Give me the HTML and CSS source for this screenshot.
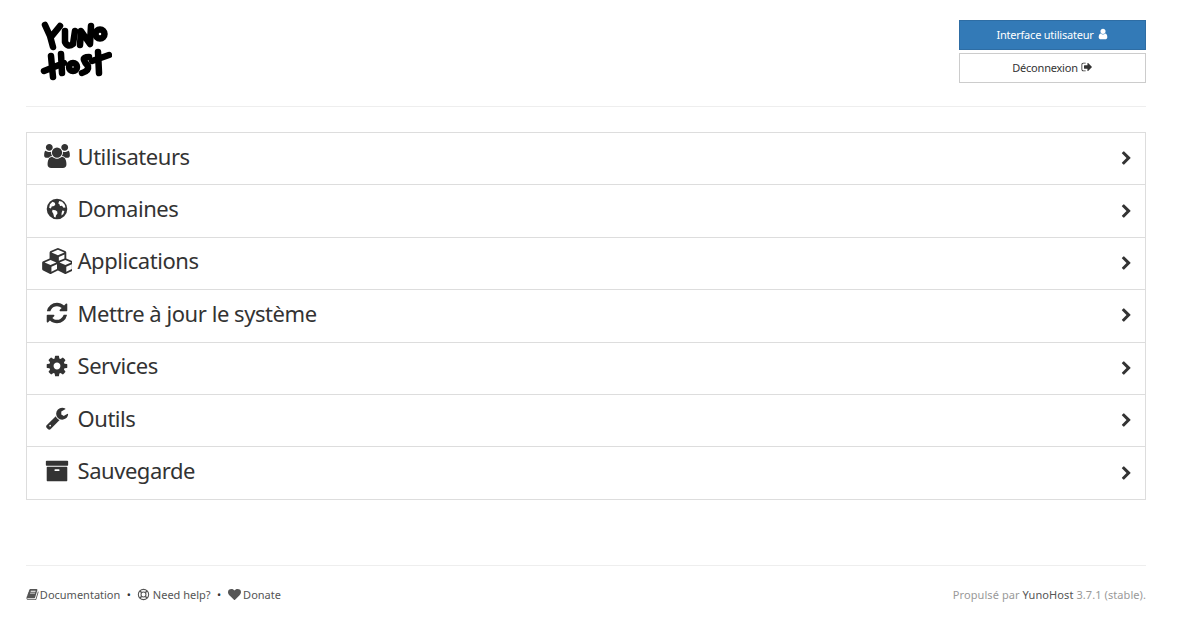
FILE: index.html
```html
<!DOCTYPE html>
<html lang="fr">
<head>
    <meta charset="UTF-8">
    <title>YunoHost Admin</title>
    <link rel="stylesheet" href="styles.css">
</head>
<body>
<svg class="icon-sprite" xmlns="http://www.w3.org/2000/svg">
    <symbol id="i-chevron" viewBox="0 0 1792 1792"><path d="M1363 877l-742 742q-19 19-45 19t-45-19l-166-166q-19-19-19-45t19-45l531-531-531-531q-19-19-19-45t19-45l166-166q19-19 45-19t45 19l742 742q19 19 19 45t-19 45z"/></symbol>
    <symbol id="i-users" viewBox="0 0 1920 1792"><path d="M593 896q-162 5-265 128h-134q-82 0-138-40.5t-56-118.5q0-353 124-353 6 0 43.5 21t97.5 42.5 119 21.5q67 0 133-23-5 37-5 66 0 139 81 256zm1071 637q0 120-73 189.5t-194 69.5h-874q-121 0-194-69.5t-73-189.5q0-53 3.5-103.5t14-109 26.5-108.5 43-97.5 62-81 85.5-53.5 111.5-20q10 0 43 21.5t73 48 107 48 135 21.5 135-21.5 107-48 73-48 43-21.5q61 0 111.5 20t85.5 53.5 62 81 43 97.5 26.5 108.5 14 109 3.5 103.5zm-1024-1277q0 106-75 181t-181 75-181-75-75-181 75-181 181-75 181 75 75 181zm704 384q0 159-112.5 271.5t-271.5 112.5-271.5-112.5-112.5-271.5 112.5-271.5 271.5-112.5 271.5 112.5 112.5 271.5zm576 225q0 78-56 118.5t-138 40.5h-134q-103-123-265-128 81-117 81-256 0-29-5-66 66 23 133 23 59 0 119-21.5t97.5-42.5 43.5-21q124 0 124 353zm-128-609q0 106-75 181t-181 75-181-75-75-181 75-181 181-75 181 75 75 181z"/></symbol>
    <symbol id="i-globe" viewBox="0 0 1792 1792"><path fill-rule="evenodd" d="M896 128a768 768 0 1 0 0 1536a768 768 0 1 0 0-1536zM560 360l170 70 40 130-90 110-180 40-60 150-130-60 60-250zM1060 290l220 70 190 210 60 210-150 20-110-140-150 20-40-140-90-60zM560 960l220 20 130 110 20 150-110 150-30 140-110-40-60-240-90-140zM1300 1010l150 40-80 220-140 110 10-190z"/></symbol>
    <symbol id="i-cubes" viewBox="0 0 2048 1792"><path d="M640 1632l384-192v-314l-384 164v342zm-64-454l404-173-404-173-404 173zm1088 454l384-192v-314l-384 164v342zm-64-454l404-173-404-173-404 173zm-448-293l384-165v-266l-384 164v267zm-64-379l441-189-441-189-441 189zm1088 518v416q0 36-19 67t-52 47l-448 224q-25 14-57 14t-57-14l-448-224q-4-2-7-4-2 2-7 4l-448 224q-25 14-57 14t-57-14l-448-224q-33-16-52-47t-19-67v-416q0-38 21.5-70t56.5-48l434-186v-400q0-38 21.5-70t56.5-48l448-192q23-10 50-10t50 10l448 192q35 16 56.5 48t21.5 70v400l434 186q36 16 57 48t21 70z"/></symbol>
    <symbol id="i-refresh" viewBox="0 0 1792 1792"><path d="M1639 1056q0 5-1 7-64 268-268 434.5t-478 166.5q-146 0-282.5-55t-243.5-157l-129 129q-19 19-45 19t-45-19-19-45v-448q0-26 19-45t45-19h448q26 0 45 19t19 45-19 45l-137 137q71 66 161 102t187 36q134 0 250-65t186-179q11-17 53-117 8-23 30-23h192q13 0 22.5 9.5t9.5 22.5zm25-800v448q0 26-19 45t-45 19h-448q-26 0-45-19t-19-45 19-45l138-138q-148-137-349-137-134 0-250 65t-186 179q-11 17-53 117-8 23-30 23h-199q-13 0-22.5-9.5t-9.5-22.5v-7q65-268 270-434.5t480-166.5q146 0 284 55.5t245 156.5l130-129q19-19 45-19t45 19 19 45z"/></symbol>
    <symbol id="i-cog" viewBox="0 0 1792 1792"><path d="M1152 896q0-106-75-181t-181-75-181 75-75 181 75 181 181 75 181-75 75-181zm512-109v222q0 12-8 23t-20 13l-185 28q-19 54-39 91 35 50 107 138 10 12 10 25t-9 23q-27 37-99 108t-94 71q-12 0-26-9l-138-108q-44 23-91 38-16 136-29 186-7 28-36 28h-222q-14 0-24.5-8.5t-11.5-21.5l-28-184q-49-16-90-37l-141 107q-10 9-25 9-14 0-25-11-126-114-165-168-7-10-7-23 0-12 8-23 15-21 51-66.5t54-70.5q-27-50-41-99l-183-27q-13-2-21-12.5t-8-23.5v-222q0-12 8-23t19-13l186-28q14-46 39-92-40-57-107-138-10-12-10-24 0-10 9-23 26-36 98.5-107.5t94.5-71.5q13 0 26 10l138 107q44-23 91-38 16-136 29-186 7-28 36-28h222q14 0 24.5 8.5t11.5 21.5l28 184q49 16 90 37l142-107q9-9 24-9 13 0 25 10 129 119 165 170 7 8 7 22 0 12-8 23-15 21-51 66.5t-54 70.5q26 50 41 98l183 28q13 2 21 12.5t8 23.5z"/></symbol>
    <symbol id="i-wrench" viewBox="0 0 1792 1792"><path d="M448 1472q0-26-19-45t-45-19-45 19-19 45 19 45 45 19 45-19 19-45zm644-420l-682 682q-37 37-90 37-52 0-91-37l-106-108q-38-36-38-90 0-53 38-91l681-681q39 98 114.5 173.5t173.5 114.5zm634-435q0 39-23 106-47 134-164.5 217.5t-258.5 83.5q-185 0-316.5-131.5t-131.5-316.5 131.5-316.5 316.5-131.5q58 0 121.5 16.5t107.5 46.5q16 11 16 28t-16 28l-293 169v224l193 107q5-3 79-48.5t135.5-81 70.5-35.5q15 0 23.5 10t8.5 25z"/></symbol>
    <symbol id="i-archive" viewBox="0 0 1792 1792"><path d="M1088 832q0-26-19-45t-45-19h-256q-26 0-45 19t-19 45 19 45 45 19h256q26 0 45-19t19-45zm576-192v960q0 26-19 45t-45 19h-1408q-26 0-45-19t-19-45v-960q0-26 19-45t45-19h1408q26 0 45 19t19 45zm64-448v256q0 26-19 45t-45 19h-1536q-26 0-45-19t-19-45v-256q0-26 19-45t45-19h1536q26 0 45 19t19 45z"/></symbol>
    <symbol id="i-user" viewBox="0 0 1792 1792"><path d="M1536 1399q0 109-62.5 187t-150.5 78h-854q-88 0-150.5-78t-62.5-187q0-85 8.5-160.5t31.5-152 58.5-131 94-89 134.5-34.5q131 128 313 128t313-128q76 0 134.5 34.5t94 89 58.5 131 31.5 152 8.5 160.5zm-256-887q0 159-112.5 271.5t-271.5 112.5-271.5-112.5-112.5-271.5 112.5-271.5 271.5-112.5 271.5 112.5 112.5 271.5z"/></symbol>
    <symbol id="i-signout" viewBox="0 0 1792 1792"><path d="M704 1440q0 4 1 20t.5 26.5-3 23.5-10 19.5-20.5 6.5h-320q-119 0-203.5-84.5t-84.5-203.5v-704q0-119 84.5-203.5t203.5-84.5h320q13 0 22.5 9.5t9.5 22.5q0 4 1 20t.5 26.5-3 23.5-10 19.5-20.5 6.5h-320q-66 0-113 47t-47 113v704q0 66 47 113t113 47h312l11.5 1 11.5 3 8 5.5 7 9 2 13.5zm928-544q0 26-19 45l-544 544q-19 19-45 19t-45-19-19-45v-288h-448q-26 0-45-19t-19-45v-384q0-26 19-45t45-19h448v-288q0-26 19-45t45-19 45 19l544 544q19 19 19 45z"/></symbol>
    <symbol id="i-heart" viewBox="0 0 1792 1792"><path d="M896 1664q-26 0-44-18l-624-602q-10-8-27.5-26t-55.5-65.5-68-97.5-53.5-121-23.5-138q0-220 127-344t351-124q62 0 126.5 21.5t120 58 95.5 68.5 76 68q36-36 76-68t95.5-68.5 120-58 126.5-21.5q224 0 351 124t127 344q0 221-229 450l-623 600q-18 18-44 18z"/></symbol>
    <symbol id="i-book" viewBox="0 0 1792 1792"><path d="M1703 478q40 57 18 129l-275 906q-19 64-76.5 107.5t-122.5 43.5h-923q-77 0-148.5-53.5t-99.5-131.5q-24-67-2-127 0-4 3-27t4-37q1-8-3-21.5t-3-19.5q2-11 8-21t16.5-23.5 16.5-23.5q23-38 45-91.5t30-91.5q3-10 .5-30t-.5-28q3-11 17-28t17-23q21-36 42-92t25-90q1-9-2.5-32t.5-28q4-13 22-30.5t22-22.5q19-26 42.5-84.5t27.5-96.5q1-8-3-25.5t-2-26.5q2-8 9-18t18-23 17-21q8-12 16.5-30.5t15-35 16-36 19.5-32 26.5-23.5 36-11.5 47.5 5.5l-1 3q38-9 51-9h761q74 0 114 56t18 130l-274 906q-36 119-71.5 153.5t-128.5 34.5h-869q-27 0-38 15-11 16-1 43 24 70 144 70h923q29 0 56-15.5t35-41.5l300-987q7-22 5-57 38 15 59 43zm-1064 2q-4 13 2 22.5t20 9.5h608q13 0 25.5-9.5t16.5-22.5l21-64q4-13-2-22.5t-20-9.5h-608q-13 0-25.5 9.5t-16.5 22.5zm-83 256q-4 13 2 22.5t20 9.5h608q13 0 25.5-9.5t16.5-22.5l21-64q4-13-2-22.5t-20-9.5h-608q-13 0-25.5 9.5t-16.5 22.5z"/></symbol>
    <symbol id="i-lifering" viewBox="0 0 1792 1792"><g fill="none" stroke="currentColor" stroke-width="150"><circle cx="896" cy="896" r="710"/><circle cx="896" cy="896" r="340"/><path stroke-width="200" d="M390 390L650 650M1402 390L1142 650M390 1402L650 1142M1402 1402L1142 1142"/></g></symbol>
</svg>

<div class="container">
    <header class="top">
        <a class="logo" href="#" aria-label="YunoHost">
            <svg width="72" height="62" viewBox="0 0 72 62" fill="none" stroke="#000" stroke-width="6.5" stroke-linecap="round" stroke-linejoin="round">
                <path d="M5 5l5 11 3 11M20 6l-9 11"/>
                <path d="M25 11l0 11q3 6 8 2l2-13"/>
                <path d="M40 25l1-14 9 13 1-18"/>
                <circle cx="60" cy="14" r="4.5"/>
                <path d="M11 36l2 21M21 34l1 19M4 51l20-8"/>
                <circle cx="33" cy="47" r="4"/>
                <path d="M49 37q-6 0-5 3t4 6q1 5-6 7"/>
                <path d="M58 32l1 21M52 41l17-6"/>
            </svg>
        </a>
        <div class="user-actions">
            <a class="btn btn-primary" href="#">Interface utilisateur <svg class="ico"><use href="#i-user"/></svg></a>
            <a class="btn btn-default" href="#">Déconnexion <svg class="ico"><use href="#i-signout"/></svg></a>
        </div>
    </header>

    <div class="list-group">
        <a class="list-item" href="#"><span class="item-icon"><svg class="ico-users"><use href="#i-users"/></svg></span><span class="item-label">Utilisateurs</span><svg class="chevron"><use href="#i-chevron"/></svg></a>
        <a class="list-item" href="#"><span class="item-icon"><svg class="ico-big"><use href="#i-globe"/></svg></span><span class="item-label">Domaines</span><svg class="chevron"><use href="#i-chevron"/></svg></a>
        <a class="list-item" href="#"><span class="item-icon"><svg class="ico-cubes"><use href="#i-cubes"/></svg></span><span class="item-label">Applications</span><svg class="chevron"><use href="#i-chevron"/></svg></a>
        <a class="list-item" href="#"><span class="item-icon"><svg class="ico-big"><use href="#i-refresh"/></svg></span><span class="item-label">Mettre à jour le système</span><svg class="chevron"><use href="#i-chevron"/></svg></a>
        <a class="list-item" href="#"><span class="item-icon"><svg class="ico-big"><use href="#i-cog"/></svg></span><span class="item-label">Services</span><svg class="chevron"><use href="#i-chevron"/></svg></a>
        <a class="list-item" href="#"><span class="item-icon"><svg class="ico-big"><use href="#i-wrench"/></svg></span><span class="item-label">Outils</span><svg class="chevron"><use href="#i-chevron"/></svg></a>
        <a class="list-item" href="#"><span class="item-icon"><svg class="ico-big"><use href="#i-archive"/></svg></span><span class="item-label">Sauvegarde</span><svg class="chevron"><use href="#i-chevron"/></svg></a>
    </div>

    <footer class="footer">
        <nav class="footer-links">
            <a href="#"><svg class="ico ico-book"><use href="#i-book"/></svg> Documentation</a>
            <span class="dot">•</span>
            <a href="#"><svg class="ico"><use href="#i-lifering"/></svg> Need help?</a>
            <span class="dot">•</span>
            <a href="#"><svg class="ico"><use href="#i-heart"/></svg> Donate</a>
        </nav>
        <div class="powered">Propulsé par <a href="#">YunoHost</a> 3.7.1 (stable).</div>
    </footer>
</div>
</body>
</html>
```

FILE: styles.css
```css
* {
    box-sizing: border-box;
}

body {
    margin: 0;
    background-color: #fff;
    color: #333;
    font-family: "Noto Sans", sans-serif;
    font-size: 12px;
}

a {
    color: inherit;
    text-decoration: none;
}

.icon-sprite {
    display: none;
}

.container {
    width: 1120px;
    margin-left: 26px;
}

.top {
    display: flex;
    justify-content: space-between;
    height: 107px;
    padding-top: 20px;
    border-bottom: 1px solid #eee;
}

.logo {
    display: block;
    margin-left: 14px;
    height: 62px;
}

.user-actions {
    display: flex;
    flex-direction: column;
    gap: 3px;
    width: 187px;
}

.btn {
    display: flex;
    justify-content: center;
    align-items: center;
    gap: 3px;
    height: 30px;
    padding-bottom: 2px;
    font-size: 11px;
    letter-spacing: -0.22px;
    border: 1px solid #ccc;
}

.btn-primary {
    background-color: #337ab7;
    border-color: #2e6da4;
    color: #fff;
}

.btn-default {
    background-color: #fff;
    color: #333;
}

.ico {
    width: 12px;
    height: 12px;
    fill: currentColor;
    vertical-align: -2px;
}

.list-group {
    margin-top: 25px;
    border: 1px solid #ddd;
}

.list-item {
    display: flex;
    align-items: center;
    height: 52.4px;
    padding-left: 15px;
    padding-right: 11px;
    font-size: 22px;
    letter-spacing: -0.45px;
    border-bottom: 1px solid #ddd;
}

.list-item:last-child {
    height: 51.6px;
    border-bottom: 0;
}

.item-icon {
    display: flex;
    justify-content: center;
    width: 30px;
    margin-right: 5.5px;
    margin-bottom: 5px;
    flex-shrink: 0;
}

.item-label {
    margin-bottom: 6px;
}

.ico-big,
.ico-users,
.ico-cubes {
    fill: #333;
}

.ico-big {
    width: 24px;
    height: 24px;
}

.ico-users {
    width: 26px;
    height: 24px;
}

.ico-cubes {
    width: 30px;
    height: 26px;
}

.chevron {
    width: 15px;
    height: 15px;
    margin-left: auto;
    fill: #333;
}

.footer {
    display: flex;
    justify-content: space-between;
    align-items: center;
    margin-top: 65px;
    height: 58px;
    border-top: 1px solid #eee;
    font-size: 11px;
    color: #555;
}

.footer-links {
    display: flex;
    align-items: center;
    gap: 5.5px;
}

.footer-links a .ico {
    width: 13px;
    height: 13px;
    margin-right: -0.5px;
}

.footer-links a .ico-book {
    margin-right: -2px;
}

.dot {
    margin: 0 1px;
    color: #333;
}

.powered {
    color: #999;
    letter-spacing: 0.08px;
}

.powered a {
    color: #555;
}
```
